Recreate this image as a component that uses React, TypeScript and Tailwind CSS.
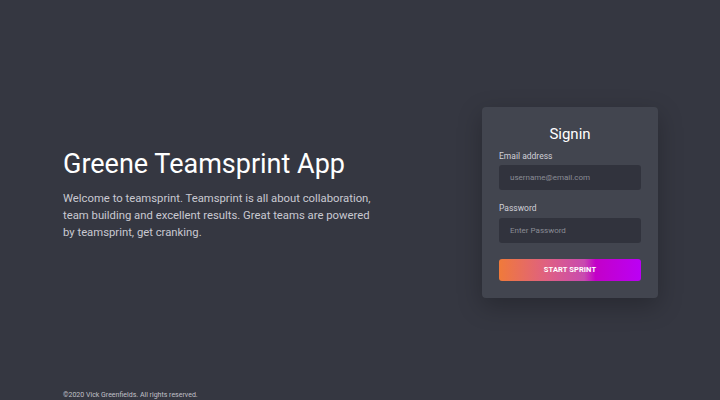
import React from "react";

export default function App() {
  return (
    <div
      className="w-[720px] h-[400px] bg-[#353741] flex flex-col overflow-hidden"
      style={{ fontFamily: "Roboto, 'Noto Sans', sans-serif" }}
    >
      <div className="flex-1 flex items-center justify-between pl-[63px] pr-[62px] pt-[15px]">
        <div className="w-[320px] mt-[-16px]">
          <h1 className="text-[27px] leading-[30px] text-white font-normal tracking-[0px]">
            Greene Teamsprint App
          </h1>
          <p className="mt-[11px] text-[11.3px] leading-[17px] text-[#c9c9d1] w-[320px]">
            Welcome to teamsprint. Teamsprint is all about collaboration, team building and excellent results. Great teams are powered by teamsprint, get cranking.
          </p>
        </div>
        <div className="w-[176px] h-[191px] bg-[#42454f] rounded-[4px] shadow-[0_8px_24px_rgba(0,0,0,0.25)] px-[17px] pt-[18px]">
          <div className="text-center text-white text-[15px] leading-[18px]">Signin</div>
          <div className="mt-[7px] text-[8.5px] leading-[12px] text-[#d0d0d8]">Email address</div>
          <div className="mt-[3px] h-[25px] rounded-[3px] bg-[#31333d] flex items-center px-[11px] text-[8px] text-[#8a8c95]">
            username@email.com
          </div>
          <div className="mt-[12px] text-[8.5px] leading-[12px] text-[#d0d0d8]">Password</div>
          <div className="mt-[4px] h-[25px] rounded-[3px] bg-[#31333d] flex items-center px-[11px] text-[8px] text-[#8a8c95]">
            Enter Password
          </div>
          <div className="mt-[16px] h-[22px] rounded-[3px] bg-[linear-gradient(90deg,#f07a3a_0%,#de5f85_35%,#c84ab0_60%,#c300c8_68%,#bb00f5_100%)] flex items-center justify-center text-[7.5px] font-bold text-white tracking-[0.1px]">
            START SPRINT
          </div>
        </div>
      </div>
      <div className="pl-[63px] h-[10px] text-[7px] leading-[10px] text-[#c0c0c8]">
        ©2020 Vick Greenfields. All rights reserved.
      </div>
    </div>
  );
}
